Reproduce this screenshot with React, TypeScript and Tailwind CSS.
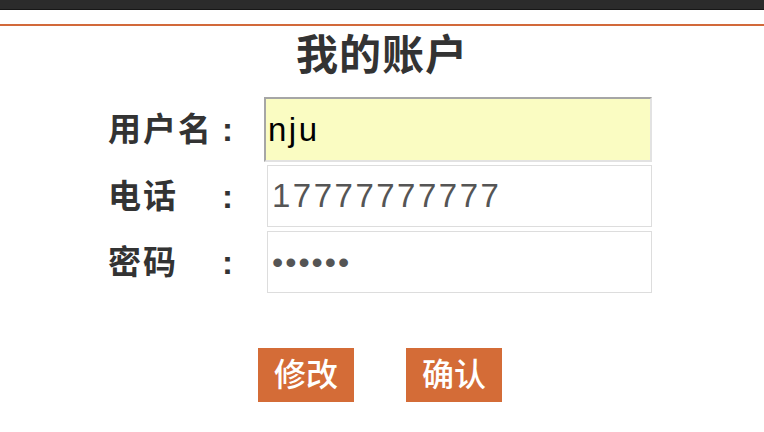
import React from 'react';

const font = 'font-[family-name:"Liberation_Sans","Noto_Sans_CJK_SC",sans-serif]';

interface RowProps {
    label: string;
    children: React.ReactNode;
    className?: string;
}

const Row: React.FC<RowProps> = ({ label, children, className }) => {
    return (
        <div className={`flex items-center ${className ?? ''}`}>
            <div className="flex w-[156px] items-center text-[33px] font-bold text-[#333] leading-none">
                <span className="w-[114px] tracking-[2px]">{label}</span>
                <span>:</span>
            </div>
            {children}
        </div>
    );
};

const App: React.FC = () => {
    return (
        <div className={`w-[764px] h-[432px] bg-white overflow-hidden ${font}`}>
            <div className="h-[10px] bg-[#2b2b2b] border-b border-[#171717]" />
            <div className="mt-[14px] h-[2px] bg-[#d2693a]" />
            <h1 className="mt-[6px] text-center text-[42px] font-bold leading-[48px] text-[#333] tracking-[1px]">
                我的账户
            </h1>
            <div className="mt-[17px] ml-[108px] flex flex-col">
                <Row label="用户名">
                    <input
                        readOnly
                        value="nju"
                        className={`w-[388px] h-[65px] border-2 border-t-[#a6a6a6] border-l-[#a6a6a6] border-r-[#e2e2e2] border-b-[#e2e2e2] bg-[#fafcc2] pl-[2px] text-[33px] tracking-[2.5px] text-black outline-none ${font}`}
                    />
                </Row>
                <Row label="电话" className="mt-[3px]">
                    <input
                        readOnly
                        value="17777777777"
                        className={`ml-[3px] w-[385px] h-[62px] border border-[#dddddd] bg-white px-[4px] text-[33px] tracking-[2.5px] text-[#555] outline-none ${font}`}
                    />
                </Row>
                <Row label="密码" className="mt-[4px]">
                    <input
                        readOnly
                        type="password"
                        value="123456"
                        className={`ml-[3px] w-[385px] h-[62px] border border-[#dddddd] bg-white px-[4px] text-[32px] tracking-[2px] text-[#555] outline-none ${font}`}
                    />
                </Row>
            </div>
            <div className="mt-[55px] flex justify-center gap-[52px] pr-[4px]">
                <button className="w-[96px] h-[54px] bg-[#d46c37] text-white text-[32px] font-medium leading-none">
                    修改
                </button>
                <button className="w-[96px] h-[54px] bg-[#d46c37] text-white text-[32px] font-medium leading-none">
                    确认
                </button>
            </div>
        </div>
    );
};

export default App;
